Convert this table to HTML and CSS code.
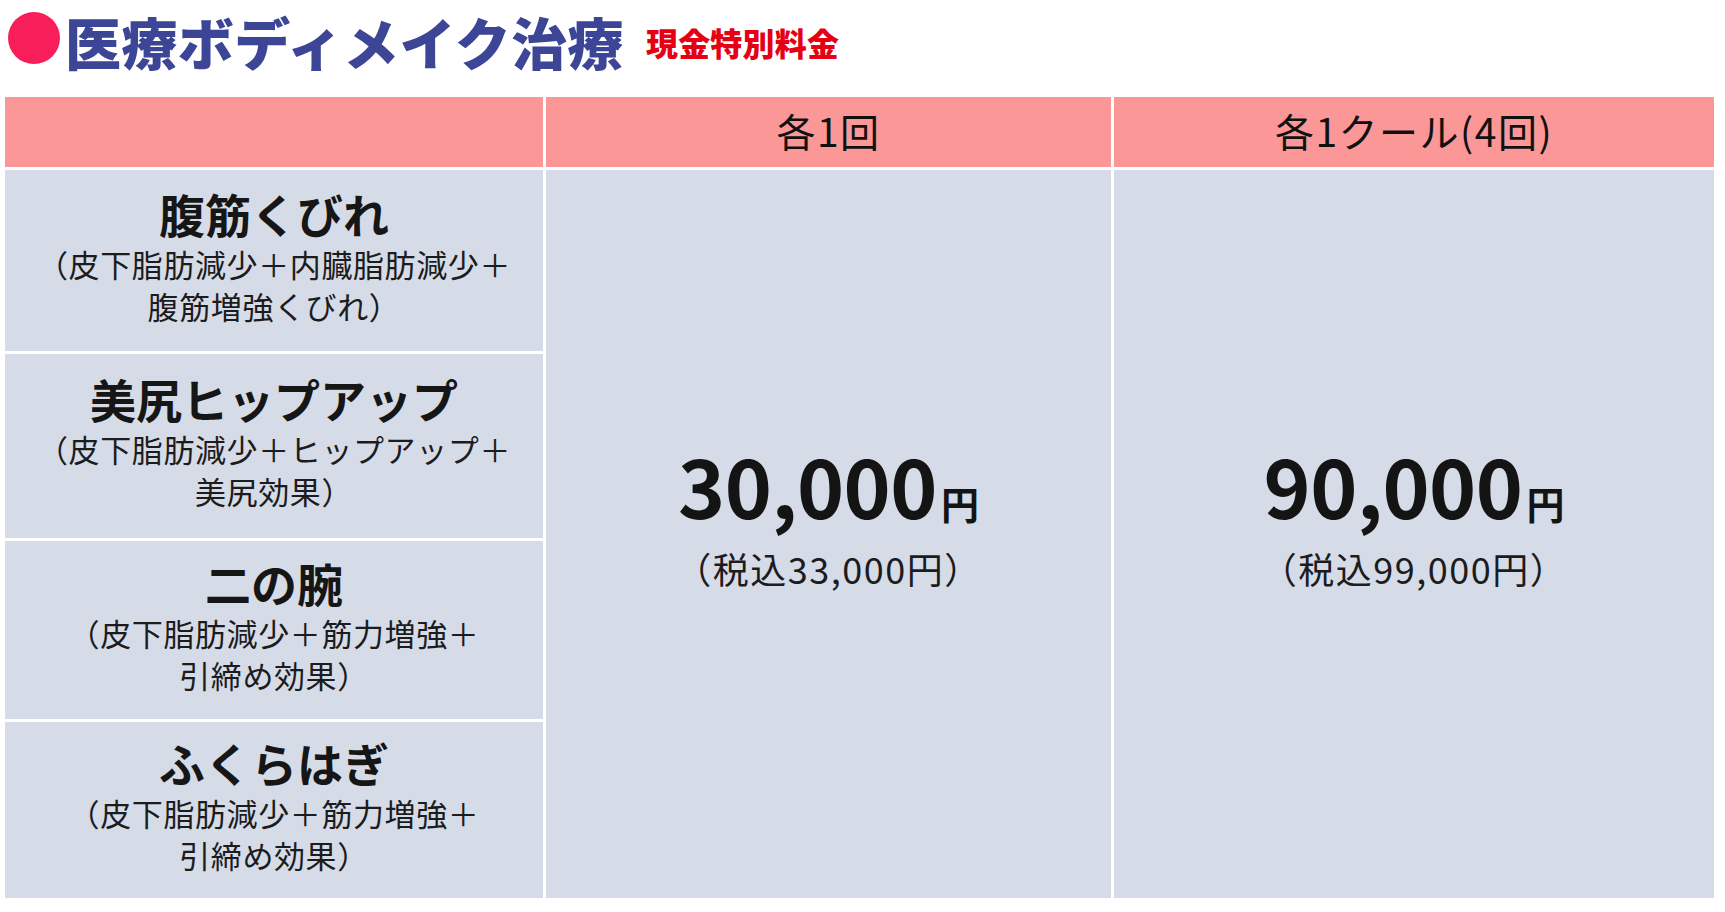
FILE: index.html
```html
<!DOCTYPE html>
<html lang="ja">
<head>
<meta charset="utf-8">
<title>医療ボディメイク治療 現金特別料金</title>
<link rel="stylesheet" href="styles.css">
</head>
<body>
<div class="page">
  <div class="title-row">
    <span class="dot"></span>
    <h1 class="title">医療ボディメイク治療</h1>
    <span class="subtitle">現金特別料金</span>
  </div>
  <div class="price-table">
    <div class="head head-blank"></div>
    <div class="head">各1回</div>
    <div class="head">各1クール(4回)</div>

    <div class="name-cell r1">
      <div class="name">腹筋くびれ</div>
      <div class="desc">（皮下脂肪減少＋内臓脂肪減少＋<br>腹筋増強くびれ）</div>
    </div>
    <div class="price-cell c2">
      <div class="price"><span class="num">30,000</span><span class="yen">円</span></div>
      <div class="tax">（税込33,000円）</div>
    </div>
    <div class="price-cell c3">
      <div class="price"><span class="num">90,000</span><span class="yen">円</span></div>
      <div class="tax">（税込99,000円）</div>
    </div>

    <div class="name-cell r2">
      <div class="name">美尻ヒップアップ</div>
      <div class="desc">（皮下脂肪減少＋ヒップアップ＋<br>美尻効果）</div>
    </div>
    <div class="name-cell r3">
      <div class="name">二の腕</div>
      <div class="desc">（皮下脂肪減少＋筋力増強＋<br>引締め効果）</div>
    </div>
    <div class="name-cell r4">
      <div class="name">ふくらはぎ</div>
      <div class="desc">（皮下脂肪減少＋筋力増強＋<br>引締め効果）</div>
    </div>
  </div>
</div>
</body>
</html>
```
FILE: styles.css
```css
html, body {
  margin: 0;
  padding: 0;
  background: #ffffff;
}

body {
  font-family: "Noto Sans CJK JP", "Noto Sans", sans-serif;
  color: #1c1c1c;
}

.page {
  padding: 0 0 0 5px;
}

.title-row {
  display: flex;
  align-items: center;
  height: 82px;
  margin-bottom: 15px;
  padding-left: 3px;
}

.dot {
  width: 52px;
  height: 52px;
  border-radius: 50%;
  background: #f81e5a;
  flex: none;
  margin-right: 5px;
  margin-top: -6px;
}

.title {
  margin: 0;
  font-size: 56px;
  font-weight: 900;
  color: #3c4596;
  letter-spacing: 0.4px;
  line-height: 1.25;
}

.subtitle {
  margin-left: 22px;
  padding-top: 1px;
  font-size: 32px;
  font-weight: 900;
  color: #e50014;
  letter-spacing: 0.2px;
  line-height: 1.25;
}

.price-table {
  display: grid;
  grid-template-columns: 538px 565px 600px;
  grid-template-rows: 70px 181px 184px 178px 176px;
  column-gap: 3px;
  row-gap: 3px;
  width: 1710px;
}

.head {
  background: #fc9797;
  display: flex;
  align-items: center;
  justify-content: center;
  font-size: 39px;
  font-weight: 400;
  color: #111;
  padding-bottom: 5px;
  letter-spacing: 1.5px;
}

.name-cell {
  grid-column: 1;
  background: #d6dbe8;
  display: flex;
  flex-direction: column;
  align-items: center;
  justify-content: center;
  text-align: center;
  padding-bottom: 12px;
}

.r1 { grid-row: 2; }
.r2 { grid-row: 3; }
.r3 { grid-row: 4; }
.r4 { grid-row: 5; }

.name {
  font-size: 46px;
  font-weight: 700;
  line-height: 60px;
  color: #161616;
}

.desc {
  font-size: 31px;
  line-height: 42px;
  font-weight: 400;
  color: #1c1c1c;
  letter-spacing: 0.6px;
}

.price-cell {
  grid-row: 2 / 6;
  background: #d6dbe8;
  display: flex;
  flex-direction: column;
  align-items: center;
  justify-content: center;
  padding-bottom: 37px;
}

.c2 { grid-column: 2; }
.c3 { grid-column: 3; }

.price {
  line-height: 84px;
  white-space: nowrap;
}

.num {
  font-size: 80px;
  font-weight: 700;
  color: #141414;
  letter-spacing: -0.5px;
}

.yen {
  font-size: 38px;
  font-weight: 700;
  margin-left: 4px;
  color: #141414;
}

.tax {
  font-size: 36px;
  font-weight: 400;
  line-height: 44px;
  color: #1c1c1c;
  margin-top: -8px;
  letter-spacing: 1.5px;
}
```
